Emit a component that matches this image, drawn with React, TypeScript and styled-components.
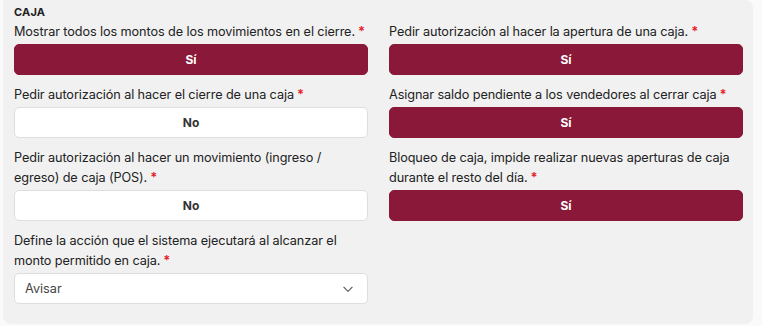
import React from "react";
import styled, { createGlobalStyle } from "styled-components";

const Global = createGlobalStyle`
  html, body { margin: 0; padding: 0; background: #fafafa; }
  body { font-family: Inter, "Noto Sans", sans-serif; color: #222; }
  * { box-sizing: border-box; }
`;

const Panel = styled.section`
  margin-left: 3px;
  width: 750px;
  height: 324px;
  background: #f1f1f1;
  border-radius: 0 8px 8px 8px;
  padding: 4px 10px 0 11px;
`;

const Title = styled.h3`
  margin: 0 0 2px 0;
  font-size: 11px;
  line-height: 16px;
  font-weight: 700;
  color: #222;
  letter-spacing: 0.2px;
`;

const Grid = styled.div`
  display: grid;
  grid-template-columns: 354px 354px;
  column-gap: 21px;
  row-gap: 10px;
  align-items: start;
`;

const Field = styled.div`
  display: flex;
  flex-direction: column;
  gap: 2px;
`;

const Label = styled.label`
  font-size: 12.7px;
  line-height: 20px;
  letter-spacing: -0.1px;
  color: #222;
`;

const Req = styled.span`
  color: #e3262b;
  font-weight: 700;
  margin-left: 3px;
`;

const Toggle = styled.button<{ $on: boolean }>`
  height: 31px;
  width: 100%;
  border-radius: 5px;
  border: 1px solid ${(p) => (p.$on ? "#8a1838" : "#dedede")};
  background: ${(p) => (p.$on ? "#8a1838" : "#ffffff")};
  color: ${(p) => (p.$on ? "#ffffff" : "#333333")};
  font-family: Inter, "Noto Sans", sans-serif;
  font-weight: 700;
  font-size: 12px;
  cursor: pointer;
`;

const Select = styled.div`
  height: 31px;
  border-radius: 5px;
  border: 1px solid #dedede;
  background: #fff;
  display: flex;
  align-items: center;
  justify-content: space-between;
  padding: 0 12px 0 10px;
  font-size: 12.7px;
  color: #444;
`;

const Chevron = () => (
  <svg width="14" height="14" viewBox="0 0 24 24" fill="none" stroke="#666" strokeWidth="2" strokeLinecap="round" strokeLinejoin="round">
    <path d="m5 9 7 7 7-7" />
  </svg>
);

type Item =
  | { label: string; kind: "toggle"; on: boolean }
  | { label: string; kind: "select"; value: string };

const items: Item[] = [
  { label: "Mostrar todos los montos de los movimientos en el cierre.", kind: "toggle", on: true },
  { label: "Pedir autorización al hacer la apertura de una caja.", kind: "toggle", on: true },
  { label: "Pedir autorización al hacer el cierre de una caja", kind: "toggle", on: false },
  { label: "Asignar saldo pendiente a los vendedores al cerrar caja", kind: "toggle", on: true },
  { label: "Pedir autorización al hacer un movimiento (ingreso / egreso) de caja (POS).", kind: "toggle", on: false },
  { label: "Bloqueo de caja, impide realizar nuevas aperturas de caja durante el resto del día.", kind: "toggle", on: true },
  { label: "Define la acción que el sistema ejecutará al alcanzar el monto permitido en caja.", kind: "select", value: "Avisar" },
];

export default function App() {
  return (
    <>
      <Global />
      <Panel>
        <Title>CAJA</Title>
        <Grid>
          {items.map((it, i) => (
            <Field key={i}>
              <Label>
                {it.label}
                <Req>*</Req>
              </Label>
              {it.kind === "toggle" ? (
                <Toggle $on={it.on}>{it.on ? "Sí" : "No"}</Toggle>
              ) : (
                <Select>
                  <span>{it.value}</span>
                  <Chevron />
                </Select>
              )}
            </Field>
          ))}
        </Grid>
      </Panel>
    </>
  );
}
